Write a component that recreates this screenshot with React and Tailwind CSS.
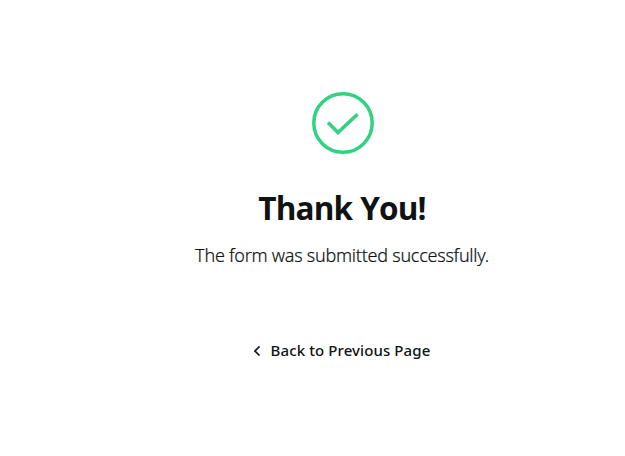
export default function App() {
  return (
    <main className="flex min-h-screen flex-col items-center bg-white pt-[92px] pl-[60px] font-['Noto_Sans','Open_Sans',sans-serif] text-[#101314]">
      <svg className="ml-px h-[62px] w-[62px] shrink-0" viewBox="0 0 62 62" fill="none" stroke="#31d282" aria-hidden="true">
        <circle cx="31" cy="31" r="29.2" strokeWidth="3.5" />
        <path d="M16 30.5 26 40.5 45.5 22.3" strokeWidth="3.6" />
      </svg>
      <h1 className="mt-[34px] mr-px font-['Open_Sans'] text-[31.5px] leading-[40px] font-bold tracking-[-0.9px] [word-spacing:1px] whitespace-nowrap">Thank You!</h1>
      <p className="mt-[13px] mr-px text-[18px] leading-[28px] font-light tracking-[-0.25px] whitespace-nowrap [-webkit-text-stroke:0.2px_#101314]">The form was submitted successfully.</p>
      <a className="mt-[69px] mr-px flex items-center text-[15px] leading-[24px] font-medium tracking-[0.1px] whitespace-nowrap">
        <svg className="mt-px mr-[10px] h-[10px] w-[7px]" viewBox="0 0 7 10" fill="none" stroke="currentColor" strokeWidth="1.7" aria-hidden="true">
          <path d="M5.5 .5 1 5 5.5 9.5" />
        </svg>
        <span>Back to Previous Page</span>
      </a>
    </main>
  );
}
